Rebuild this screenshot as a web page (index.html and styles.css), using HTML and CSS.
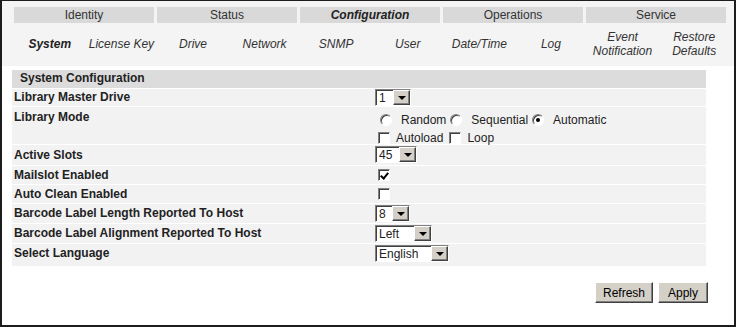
FILE: index.html
```html
<!DOCTYPE html>
<html lang="en">
<head>
  <meta charset="UTF-8">
  <meta name="viewport" content="width=device-width, initial-scale=1">
  <title>System Configuration</title>
  <link rel="stylesheet" href="styles.css">
</head>
<body>
<div class="frame">

  <div class="top">
    <ul class="tabs">
      <li>Identity</li>
      <li>Status</li>
      <li class="active">Configuration</li>
      <li>Operations</li>
      <li>Service</li>
    </ul>
    <ul class="subnav">
      <li class="active">System</li>
      <li>License Key</li>
      <li>Drive</li>
      <li>Network</li>
      <li>SNMP</li>
      <li>User</li>
      <li>Date/Time</li>
      <li>Log</li>
      <li>Event<br>Notification</li>
      <li>Restore<br>Defaults</li>
    </ul>
  </div>

  <div class="panel">
    <div class="panel-head">System Configuration</div>

    <div class="row drive">
      <div class="label">Library Master Drive</div>
      <div class="value"><span class="select w-drive"><span class="val">1</span><span class="arrow"></span></span></div>
    </div>

    <div class="row mode">
      <div class="label">Library Mode</div>
      <div class="value">
        <div class="opts radios">
          <span class="radio"></span><span class="opt">Random</span>
          <span class="radio"></span><span class="opt">Sequential</span>
          <span class="radio on"></span><span class="opt">Automatic</span>
        </div>
        <div class="opts checks">
          <span class="check"></span><span class="opt">Autoload</span>
          <span class="check"></span><span class="opt">Loop</span>
        </div>
      </div>
    </div>

    <div class="row slots">
      <div class="label">Active Slots</div>
      <div class="value"><span class="select w-slots"><span class="val">45</span><span class="arrow"></span></span></div>
    </div>

    <div class="row short">
      <div class="label">Mailslot Enabled</div>
      <div class="value"><span class="check on"></span></div>
    </div>

    <div class="row short">
      <div class="label">Auto Clean Enabled</div>
      <div class="value"><span class="check"></span></div>
    </div>

    <div class="row">
      <div class="label">Barcode Label Length Reported To Host</div>
      <div class="value"><span class="select w-len"><span class="val">8</span><span class="arrow"></span></span></div>
    </div>

    <div class="row">
      <div class="label">Barcode Label Alignment Reported To Host</div>
      <div class="value"><span class="select w-align"><span class="val">Left</span><span class="arrow"></span></span></div>
    </div>

    <div class="row last">
      <div class="label">Select Language</div>
      <div class="value"><span class="select w-lang"><span class="val">English</span><span class="arrow"></span></span></div>
    </div>
  </div>

  <div class="actions">
    <button class="btn refresh">Refresh</button>
    <button class="btn apply">Apply</button>
  </div>

</div>
</body>
</html>
```

FILE: styles.css
```css
* { box-sizing: border-box; margin: 0; padding: 0; }

body {
  font-family: "Liberation Sans", Arial, sans-serif;
  font-size: 12px;
  color: #222;
  background: #fff;
}

.frame {
  width: 736px;
  height: 327px;
  border: 2px solid #1c1c1c;
  border-top-width: 1px;
  background: #fff;
}

/* top navigation */
.top {
  background: #f4f4f4;
  padding: 6px 0 6px 12px;
}

.tabs {
  list-style: none;
  display: grid;
  grid-template-columns: repeat(5, 140px);
  gap: 3px;
}
.tabs li {
  background: #d9d9d9;
  color: #333;
  height: 16px;
  line-height: 16px;
  text-align: center;
}
.tabs li.active { font-weight: bold; font-style: italic; color: #222; }

.subnav {
  list-style: none;
  display: grid;
  grid-template-columns: repeat(10, 71.6px);
  height: 32px;
  margin-top: 5px;
}
.subnav li {
  display: flex;
  align-items: center;
  justify-content: center;
  text-align: center;
  font-style: italic;
  line-height: 14px;
  color: #333;
}
.subnav li.active { font-weight: bold; color: #222; }

/* configuration table */
.panel {
  margin: 4px 0 0 10px;
  width: 694px;
  background: #f2f2f3;
}
.panel-head {
  background: #dcdcdc;
  font-weight: bold;
  height: 19px;
  line-height: 17px;
  padding-left: 8px;
  border-bottom: 1px solid #fff;
}

.row {
  display: grid;
  grid-template-columns: 363px 1fr;
  height: 20px;
  border-bottom: 1px solid #fff;
}
.row.drive { height: 18px; }
.row.mode { height: 38px; }
.row.slots { height: 21px; }
.row.short { height: 19px; }
.row.last { height: 22px; border-bottom: none; }

.label {
  font-weight: bold;
  padding: 1px 0 0 2px;
  line-height: 16px;
}
.drive .label { padding-top: 0; }
.mode .label, .slots .label { padding-top: 2px; }
.value {
  padding-top: 1px;
  line-height: 16px;
}
.drive .value { padding-top: 0; }

/* classic form controls */
.select {
  display: inline-flex;
  height: 17px;
  border: 1px solid;
  border-color: #808080 #fff #fff #808080;
  box-shadow: inset 1px 1px #404040;
  background: #fff;
  vertical-align: top;
}
.select .val {
  flex: 1;
  padding: 1px 0 0 3px;
  line-height: 14px;
}
.select .arrow {
  width: 17px;
  background: #d4d0c8;
  border: 1px solid;
  border-color: #fff #404040 #404040 #fff;
  box-shadow: inset -1px -1px #808080;
  display: flex;
  align-items: center;
  justify-content: center;
}
.select .arrow::after {
  content: "";
  border-left: 4px solid transparent;
  border-right: 4px solid transparent;
  border-top: 4px solid #000;
}
.w-drive { width: 36px; }
.w-slots { width: 42px; }
.w-len { width: 35px; }
.w-align { width: 57px; }
.w-lang { width: 74px; }

.opts {
  display: flex;
  align-items: center;
  height: 18px;
}
.radios { padding: 3px 0 0 5px; height: 21px; }
.checks { padding-left: 3px; }
.opt { margin-right: 4px; }
.radios .opt { margin-left: 9px; }
.checks .opt { margin-left: 6px; margin-right: 6px; }

.radio {
  width: 12px;
  height: 12px;
  border-radius: 50%;
  border: 1px solid;
  border-color: #808080 #fff #fff #808080;
  box-shadow: inset 1px 1px #404040;
  background: #fff;
  display: flex;
  align-items: center;
  justify-content: center;
}
.radio.on::after {
  content: "";
  width: 4px;
  height: 4px;
  border-radius: 50%;
  background: #000;
}

.check {
  display: inline-block;
  width: 12px;
  height: 12px;
  border: 1px solid;
  border-color: #808080 #fff #fff #808080;
  box-shadow: inset 1px 1px #404040;
  background: #fff;
  position: relative;
  vertical-align: top;
}
.value > .check { margin: 2px 0 0 3px; }
.check.on::after {
  content: "";
  position: absolute;
  left: 3px;
  top: 1px;
  width: 3px;
  height: 6px;
  border-right: 2px solid #000;
  border-bottom: 2px solid #000;
  transform: rotate(40deg);
}

/* buttons */
.actions {
  display: flex;
  justify-content: flex-end;
  gap: 5px;
  width: 706px;
  margin-top: 16px;
}
.btn {
  font-family: "Liberation Sans", Arial, sans-serif;
  font-size: 12px;
  color: #000;
  height: 21px;
  background: #d4d0c8;
  border: 1px solid;
  border-color: #fff #404040 #404040 #fff;
  box-shadow: inset -1px -1px #808080;
}
.refresh { width: 58px; }
.apply { width: 50px; }
```
